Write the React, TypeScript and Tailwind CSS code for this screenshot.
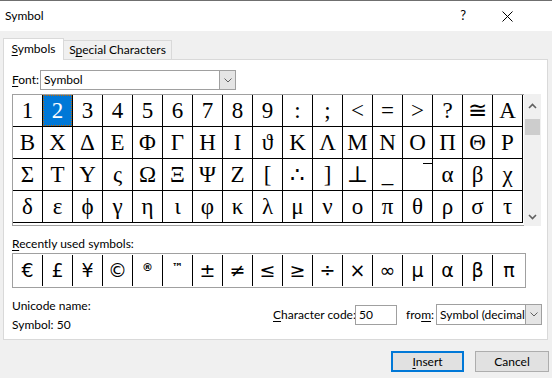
import React from "react";

const ui = { fontFamily: 'Lato, "Noto Sans", sans-serif' };
const serif = { fontFamily: '"Liberation Serif", "DejaVu Serif", serif' };
const sym = { fontFamily: '"DejaVu Sans", "Noto Sans", sans-serif' };

const rows: string[][] = [
  ["1", "2", "3", "4", "5", "6", "7", "8", "9", ":", ";", "<", "=", ">", "?", "≅", "Α"],
  ["Β", "Χ", "Δ", "Ε", "Φ", "Γ", "Η", "Ι", "ϑ", "Κ", "Λ", "Μ", "Ν", "Ο", "Π", "Θ", "Ρ"],
  ["Σ", "Τ", "Υ", "ς", "Ω", "Ξ", "Ψ", "Ζ", "[", "∴", "]", "⊥", "_", "‾", "α", "β", "χ"],
  ["δ", "ε", "ϕ", "γ", "η", "ι", "φ", "κ", "λ", "μ", "ν", "ο", "π", "θ", "ρ", "σ", "τ"],
];

const recent = ["€", "£", "¥", "©", "®", "™", "±", "≠", "≤", "≥", "÷", "×", "∞", "μ", "α", "β", "π"];

function Chevron({ up = false }: { up?: boolean }) {
  return (
    <svg width="9" height="6" viewBox="0 0 9 6">
      <polyline
        points={up ? "1,5 4.5,1.5 8,5" : "1,1 4.5,4.5 8,1"}
        fill="none"
        stroke="#606060"
        strokeWidth="1.6"
      />
    </svg>
  );
}

function SmallChevron() {
  return (
    <svg width="8" height="5" viewBox="0 0 8 5">
      <polyline points="0.5,0.5 4,4 7.5,0.5" fill="none" stroke="#606060" strokeWidth="1" />
    </svg>
  );
}

export default function App() {
  return (
    <div className="w-[552px] h-[378px] bg-[#f0f0f0] flex flex-col overflow-hidden text-[12px] text-black" style={ui}>
      <div className="h-px bg-[#6f6f6f]" />
      <div className="h-[30px] bg-white flex items-center pl-[5px]">
        <span>Symbol</span>
        <span className="ml-auto text-[13px] mr-[36px]">?</span>
        <svg width="11" height="11" viewBox="0 0 11 11" className="mr-[39px]">
          <path d="M0.5 0.5 L10.5 10.5 M10.5 0.5 L0.5 10.5" stroke="#000" strokeWidth="1" />
        </svg>
      </div>
      <div className="flex-1 flex flex-col pl-[3px] pt-[7px]">
        <div className="flex items-end h-[21px]">
          <div className="relative z-10 w-[61px] h-[22px] -mb-px bg-white border border-b-0 border-[#d9d9d9] flex items-center justify-center pb-[1px]">
            <span><u className="underline-offset-2">S</u>ymbols</span>
          </div>
          <div className="w-[108px] h-[19px] border border-l-0 border-b-0 border-[#d9d9d9] flex items-center justify-center">
            <span>S<u className="underline-offset-2">p</u>ecial Characters</span>
          </div>
        </div>
        <div className="w-[545px] h-[281px] bg-white border border-[#d9d9d9] flex flex-col pl-[8px]">
          <div className="mt-[10px] h-[20px] flex items-center">
            <span className="w-[28px]"><u className="underline-offset-2">F</u>ont:</span>
            <div className="w-[196px] h-[20px] border border-[#a0a0a0] flex items-center">
              <span className="pl-[3px] flex-1">Symbol</span>
              <div className="w-[16px] h-full bg-[#e5e5e5] border-l border-[#a0a0a0] flex items-center justify-center">
                <SmallChevron />
              </div>
            </div>
          </div>
          <div className="mt-[4px] flex h-[132px]">
            <div className="w-[512px] h-[132px] border-l border-t border-b border-[#a0a0a0] overflow-hidden" style={serif}>
              {rows.map((r, ri) => (
                <div key={ri} className="flex">
                  {r.map((c, ci) => {
                    const sel = ri === 0 && ci === 1;
                    return (
                      <div
                        key={ci}
                        className="w-[30px] h-[32px] border-r border-b border-black flex items-center justify-center text-[23px] leading-none relative"
                      >
                        {sel ? (
                          <div className="absolute inset-0 bg-[#0078d7] border border-dotted border-[#c46a00] text-white flex items-center justify-center">
                            {c}
                          </div>
                        ) : c === "‾" ? (
                          <div className="absolute right-0 top-[4px] w-[9px] h-px bg-black" />
                        ) : (
                          c
                        )}
                      </div>
                    );
                  })}
                </div>
              ))}
            </div>
            <div className="w-[17px] h-[132px] bg-[#f0f0f0] flex flex-col items-center">
              <div className="h-[17px] flex items-center justify-center mt-[3px]">
                <Chevron up />
              </div>
              <div className="mt-[5px] w-[15px] h-[16px] bg-[#cdcdcd]" />
              <div className="mt-auto h-[17px] flex items-center justify-center mb-[1px]">
                <Chevron />
              </div>
            </div>
          </div>
          <div className="mt-[9px] h-[17px] flex items-center">
            <span><u className="underline-offset-2">R</u>ecently used symbols:</span>
          </div>
          <div className="mt-[1px] w-[514px] h-[35px] border border-[#a0a0a0] flex items-stretch py-[1px]" style={sym}>
            {recent.map((c, i) => (
              <div
                key={i}
                className={`${i === 16 ? "flex-1" : "w-[30px] border-r border-black"} flex justify-center ${
                  c === "®" || c === "™" ? "items-start pt-[5px] text-[11px] font-bold" : "items-center text-[19px]"
                }`}
              >
                {c}
              </div>
            ))}
          </div>
          <div className="flex mt-[9px]">
            <div className="flex flex-col">
              <div className="h-[17px] flex items-center">Unicode name:</div>
              <div className="h-[19px] mt-[1px] flex items-center">Symbol: 50</div>
            </div>
            <div className="ml-auto mr-[5px] mt-[7px] h-[21px] flex items-center whitespace-nowrap">
              <span className="w-[82px]"><u className="underline-offset-2">C</u>haracter code:</span>
              <div className="w-[42px] h-[20px] border border-[#a0a0a0] flex items-center pl-[3px]">50</div>
              <span className="ml-[9px] w-[30px]">fro<u className="underline-offset-2">m</u>:</span>
              <div className="w-[106px] h-[21px] border border-[#a0a0a0] bg-white flex items-center overflow-hidden">
                <span className="pl-[3px] flex-1 whitespace-nowrap overflow-hidden">Symbol (decimal)</span>
                <div className="w-[16px] h-full bg-[#e5e5e5] border-l border-[#a0a0a0] flex items-center justify-center shrink-0">
                  <SmallChevron />
                </div>
              </div>
            </div>
          </div>
        </div>
        <div className="flex mt-[11px] pl-[388px]">
          <div className="w-[73px] h-[21px] bg-[#e1e1e1] border-2 border-[#0078d7] flex items-center justify-center">
            <span><u className="underline-offset-2">I</u>nsert</span>
          </div>
          <div className="ml-[11px] w-[74px] h-[21px] bg-[#e1e1e1] border border-[#adadad] flex items-center justify-center">
            Cancel
          </div>
        </div>
      </div>
    </div>
  );
}
